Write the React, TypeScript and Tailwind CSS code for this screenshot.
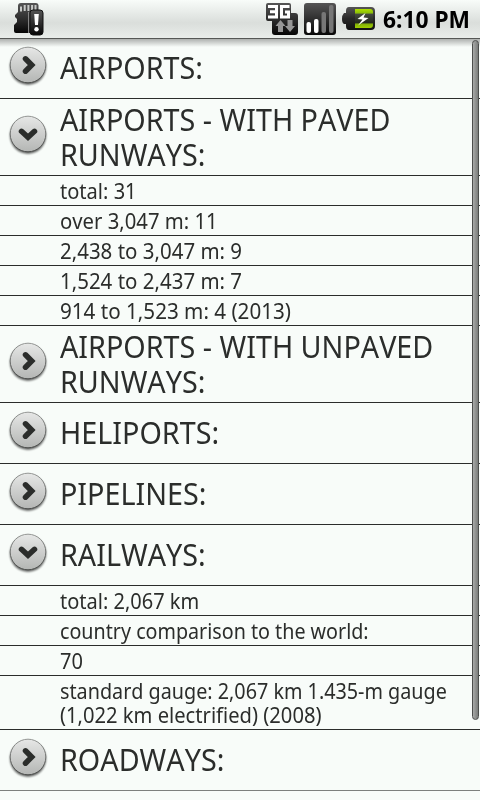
import React, { useState } from "react";
import clsx from "clsx";

interface Line {
  text: string;
  scale: string;
}

interface Section {
  id: string;
  title: string[];
  details: Line[][];
}

const sections: Section[] = [
  { id: "airports", title: ["AIRPORTS:"], details: [] },
  {
    id: "paved",
    title: ["AIRPORTS - WITH PAVED", "RUNWAYS:"],
    details: [
      [{ text: "total: 31", scale: "scale-x-[0.955]" }],
      [{ text: "over 3,047 m: 11", scale: "scale-x-[0.966]" }],
      [{ text: "2,438 to 3,047 m: 9", scale: "scale-x-[0.975]" }],
      [{ text: "1,524 to 2,437 m: 7", scale: "scale-x-[0.975]" }],
      [{ text: "914 to 1,523 m: 4 (2013)", scale: "scale-x-[0.982]" }]
    ]
  },
  { id: "unpaved", title: ["AIRPORTS - WITH UNPAVED", "RUNWAYS:"], details: [] },
  { id: "heliports", title: ["HELIPORTS:"], details: [] },
  { id: "pipelines", title: ["PIPELINES:"], details: [] },
  {
    id: "railways",
    title: ["RAILWAYS:"],
    details: [
      [{ text: "total: 2,067 km", scale: "scale-x-[0.953]" }],
      [{ text: "country comparison to the world:", scale: "scale-x-[0.938]" }],
      [{ text: "70", scale: "scale-x-[0.955]" }],
      [
        { text: "standard gauge: 2,067 km 1.435-m gauge", scale: "scale-x-[0.941]" },
        { text: "(1,022 km electrified) (2008)", scale: "scale-x-[0.96]" }
      ]
    ]
  },
  { id: "roadways", title: ["ROADWAYS:"], details: [] }
];

function SdCardIcon() {
  return (
    <svg width="30" height="34" viewBox="0 0 30 34" className="block">
      <defs>
        <linearGradient id="sd" x1="0" y1="0" x2="0" y2="1">
          <stop offset="0" stopColor="#555" />
          <stop offset="0.5" stopColor="#303030" />
          <stop offset="1" stopColor="#050505" />
        </linearGradient>
      </defs>
      <path d="M7 1h15q2 0 2.500 2v28H2q-2 0-2-2v-6l3-3v-3l-2-2v-2l3-3V4q0-3 3-3z" fill="url(#sd)" />
      <path d="M7 4.500v5M10.700 3v6M14.400 3v6M18.100 3v6M21.500 3v5" stroke="#c8cac8" strokeWidth="2" />
      <path d="M14.700 10v21" stroke="#999" strokeWidth="1" />
      <rect x="16" y="8" width="13" height="25" rx="3" fill="url(#sd)" stroke="#111" />
      <path d="M20.200 12h4.600l-.8 11h-3z" fill="#fff" />
      <circle cx="22.500" cy="27.300" r="2.200" fill="#fff" />
    </svg>
  );
}

function NetworkIcon() {
  return (
    <svg width="32" height="32" viewBox="0 0 32 32" className="block">
      <defs>
        <linearGradient id="net" x1="0" y1="0" x2="0" y2="1">
          <stop offset="0" stopColor="#555" />
          <stop offset="1" stopColor="#050505" />
        </linearGradient>
      </defs>
      <path d="M2 0h21q2 0 2 2v8h4q3 0 3 3v16q0 3-3 3H9q-3 0-3-3V18H2q-2 0-2-2V2q0-2 2-2z" fill="url(#net)" />
      <path d="M2 3.500h8.500v10.500H2M4 8.800h6.500" fill="none" stroke="#fff" strokeWidth="3" />
      <path d="M23.500 3.500h-8v10.500h7V9h-3.500" fill="none" stroke="#fff" strokeWidth="3" />
      <path d="M14.500 17l5 6H17v6h-5v-6H9.500z" fill="#969696" />
      <path d="M21.500 17h5v6H29l-5 6-5-6h2.500z" fill="#969696" />
    </svg>
  );
}

function SignalIcon() {
  return (
    <svg width="32" height="32" viewBox="0 0 32 32" className="block">
      <defs>
        <linearGradient id="sig" x1="0" y1="0" x2="0" y2="1">
          <stop offset="0" stopColor="#555" />
          <stop offset="1" stopColor="#080808" />
        </linearGradient>
      </defs>
      <rect width="32" height="32" rx="3" fill="url(#sig)" />
      <rect x="2.500" y="19" width="4.500" height="11" rx="2" fill="#fff" />
      <rect x="10" y="16" width="4.500" height="14" rx="2" fill="#fff" />
      <rect x="17.500" y="9" width="4.500" height="21" rx="2" fill="#777" />
      <rect x="25" y="2" width="4.500" height="28" rx="2" fill="#777" />
    </svg>
  );
}

function BatteryIcon() {
  return (
    <svg width="33" height="24" viewBox="0 0 33 24" className="block">
      <defs>
        <linearGradient id="bat" x1="0" y1="0" x2="0" y2="1">
          <stop offset="0" stopColor="#555" />
          <stop offset="0.500" stopColor="#282828" />
          <stop offset="1" stopColor="#111" />
        </linearGradient>
        <linearGradient id="charge" x1="0" y1="0" x2="0" y2="1">
          <stop offset="0" stopColor="#aee000" />
          <stop offset="0.220" stopColor="#8abd08" />
          <stop offset="0.260" stopColor="#454a40" />
          <stop offset="0.740" stopColor="#22261c" />
          <stop offset="0.780" stopColor="#80ad08" />
          <stop offset="1" stopColor="#a0d000" />
        </linearGradient>
      </defs>
      <path d="M7 0h22q4 0 4 4v15q0 4-4 4H7q-3 0-3-4v-2H2q-2-1-2-5t2-6h2V4q0-4 3-4z" fill="url(#bat)" />
      <path d="M13 2h15q3 0 3 3v13q0 3-3 3H13z" fill="url(#charge)" />
      <path d="M23.500 6l-8 6 5 .5-4.500 6 10.500-7.500-5-.5z" fill="#fff" />
    </svg>
  );
}

function ExpanderIcon({ open }: { open: boolean }) {
  return (
    <svg width="44" height="44" viewBox="0 0 44 44" className="block">
      <defs>
        <linearGradient id="disc" x1="0" y1="0" x2="0" y2="1">
          <stop offset="0" stopColor="#e6e7e6" />
          <stop offset="1" stopColor="#b4b6b4" />
        </linearGradient>
        <linearGradient id="rim" x1="0" y1="0" x2="0" y2="1">
          <stop offset="0" stopColor="#969896" />
          <stop offset="1" stopColor="#4c4e4c" />
        </linearGradient>
        <filter id="shade" x="-20%" y="-20%" width="140%" height="150%">
          <feGaussianBlur stdDeviation="1.2" />
        </filter>
      </defs>
      <circle cx="22" cy="23.700" r="18" fill="#000" opacity="0.650" filter="url(#shade)" />
      <circle cx="22" cy="22" r="17.800" fill="url(#disc)" stroke="url(#rim)" />
      {open ? (
        <path d="M15.500 19.300L22 25.300l6.500-6" fill="none" stroke="#2b2d2b" strokeWidth="5.500" strokeLinecap="round" />
      ) : (
        <path d="M19.500 15.800l6.200 6.200-6.200 6.200" fill="none" stroke="#2b2d2b" strokeWidth="5.500" strokeLinecap="round" />
      )}
    </svg>
  );
}

function StatusBar() {
  return (
    <header className="flex h-[39px] shrink-0 items-start border-b border-[#555755] bg-linear-to-b from-[#f8fcf9] via-[#dadedb] via-60% to-[#e9edea] pl-3.5 pr-[9px]">
      <div className="pt-0.5">
        <SdCardIcon />
      </div>
      <div className="ml-auto flex items-start">
        <div className="mr-1.5 pt-[3px]">
          <NetworkIcon />
        </div>
        <div className="mr-1.5 pt-[3px]">
          <SignalIcon />
        </div>
        <div className="mr-2 pt-[7px]">
          <BatteryIcon />
        </div>
        <div className="w-[88px] whitespace-nowrap pt-1 text-[23px] font-bold leading-[31px] text-black">
          <span className="inline-block origin-left scale-x-[0.99]">6:10 PM</span>
        </div>
      </div>
    </header>
  );
}

function SectionRow({ section, open, onToggle }: { section: Section; open: boolean; onToggle: () => void }) {
  const tall = section.title.length > 1;

  return (
    <button
      onClick={onToggle}
      className={clsx(
        "flex w-full items-start border-b pl-1.5 text-left",
        tall ? "h-[77px] pt-[3px]" : "h-[61px] pt-3",
        section.id === "roadways" ? "border-[#7d807d]" : "border-[#2b2d2b]"
      )}
    >
      <span className={clsx("w-[54px] shrink-0", tall ? "pt-2.5" : "-mt-[7px]")}>
        <ExpanderIcon open={open} />
      </span>
      <span className="text-[30px] leading-[35px]">
        {section.title.map((line) => (
          <span key={line} className="block origin-left scale-x-[0.957] whitespace-nowrap">
            {line}
          </span>
        ))}
      </span>
    </button>
  );
}

function App() {
  const [expanded, setExpanded] = useState<string[]>(["paved", "railways"]);

  const toggle = (id: string) => {
    setExpanded((prev) => (prev.includes(id) ? prev.filter((x) => x !== id) : [...prev, id]));
  };

  return (
    <div className="relative flex h-[800px] w-[480px] flex-col overflow-hidden bg-[#f8fcf9] font-['Noto_Sans','Open_Sans',sans-serif] text-[#2b2d2b] [font-kerning:none]">
      <StatusBar />

      {/* Section list */}
      <main className="-mt-px min-h-0 flex-1">
        {sections.map((section) => (
          <section key={section.id}>
            <SectionRow
              section={section}
              open={expanded.includes(section.id)}
              onToggle={() => toggle(section.id)}
            />
            {expanded.includes(section.id) &&
              section.details.map((lines) => (
                <div
                  key={lines[0].text}
                  className="border-b border-[#2b2d2b] pb-0.5 pl-[60px] pt-[3px] text-[21px] leading-6"
                >
                  {lines.map((line) => (
                    <p key={line.text} className={clsx("origin-left whitespace-nowrap", line.scale)}>
                      {line.text}
                    </p>
                  ))}
                </div>
              ))}
          </section>
        ))}
      </main>

      {/* Shadow under the status bar */}
      <div className="pointer-events-none absolute inset-x-0 top-[39px] h-2 bg-linear-to-b from-black/30 to-transparent" />

      {/* Scroll thumb */}
      <div className="absolute right-[1px] top-10 h-[680px] w-[7px] rounded-full border border-[#4c4e4c] bg-linear-to-r from-[#a8aaa8] to-[#7b7d7b]" />
    </div>
  );
}

export default App;
